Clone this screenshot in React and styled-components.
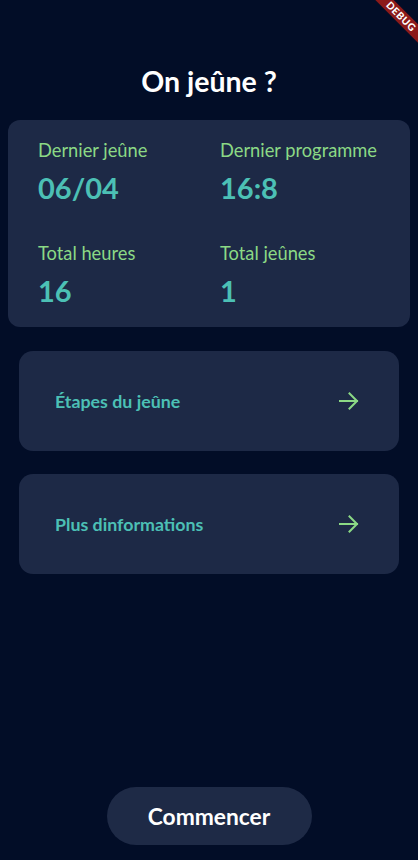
import React from "react";
import styled, { createGlobalStyle } from "styled-components";

const Global = createGlobalStyle`
    html, body {
        margin: 0;
        padding: 0;
        background-color: #020d27;
    }
    * {
        box-sizing: border-box;
    }
`

const Screen = styled.div`
    position: relative;
    width: 418px;
    height: 860px;
    overflow: hidden;
    background-color: #020d27;
    font-family: "Lato", "Noto Sans", sans-serif;
    display: flex;
    flex-direction: column;
    padding: 62px 8px 15px 8px;
`
const Title = styled.h1`
    margin: 0;
    height: 38px;
    line-height: 38px;
    text-align: center;
    color: white;
    font-size: 28.5px;
    font-weight: 700;
`
const StatsCard = styled.div`
    margin-top: 20px;
    background-color: #1d2946;
    border-radius: 12px;
    padding: 20px 14px 19px 30px;
    display: grid;
    grid-template-columns: 182px 1fr;
    row-gap: 38px;
`
const Stat = styled.div`
    display: flex;
    flex-direction: column;
    gap: 11px;
`
const Label = styled.span`
    color: #8bd985;
    font-size: 18.3px;
    line-height: 20px;
    white-space: nowrap;
`
const Value = styled.span`
    color: #4cc0b5;
    font-size: 29px;
    font-weight: 700;
    line-height: 34px;
`
const LinkList = styled.div`
    margin-top: 24px;
    padding: 0 11px;
    display: flex;
    flex-direction: column;
    gap: 23px;
`
const LinkCard = styled.div`
    height: 100px;
    background-color: #1d2946;
    border-radius: 14px;
    display: flex;
    align-items: center;
    justify-content: space-between;
    padding: 0 40px 0 36px;
    cursor: pointer;
`
const LinkText = styled.span`
    color: #4cc0b5;
    font-size: 17.8px;
    font-weight: 700;
`
const Footer = styled.div`
    margin-top: auto;
    display: flex;
    justify-content: center;
`
const StartButton = styled.button`
    width: 205px;
    height: 58px;
    border: none;
    border-radius: 29px;
    background-color: #1e2a46;
    color: white;
    font-family: "Lato", "Noto Sans", sans-serif;
    font-size: 22.8px;
    font-weight: 700;
    cursor: pointer;
`
const Banner = styled.div`
    position: absolute;
    top: 10px;
    right: -28px;
    width: 90px;
    height: 13px;
    background-color: #8b1a1a;
    transform: rotate(45deg);
    color: white;
    font-family: "Lato", sans-serif;
    font-size: 10px;
    font-weight: 900;
    line-height: 13px;
    text-align: center;
    letter-spacing: 0.5px;
`

function Arrow(){
    return(
        <svg width="20" height="20" viewBox="0 0 20 20" fill="none" stroke="#8bd985" strokeWidth="2" strokeLinecap="square">
            <path d="M1 10 H18" />
            <path d="M10.5 2.5 L18 10 L10.5 17.5" />
        </svg>
    )
}

const stats = [
    { label: "Dernier jeûne", value: "06/04" },
    { label: "Dernier programme", value: "16:8" },
    { label: "Total heures", value: "16" },
    { label: "Total jeûnes", value: "1" },
]

export default function App(){
    return(
        <Screen>
            <Global />
            <Banner>DEBUG</Banner>
            <Title>On jeûne ?</Title>
            <StatsCard>
                {stats.map((s) => (
                    <Stat key={s.label}>
                        <Label>{s.label}</Label>
                        <Value>{s.value}</Value>
                    </Stat>
                ))}
            </StatsCard>
            <LinkList>
                <LinkCard>
                    <LinkText>Étapes du jeûne</LinkText>
                    <Arrow />
                </LinkCard>
                <LinkCard>
                    <LinkText>Plus dinformations</LinkText>
                    <Arrow />
                </LinkCard>
            </LinkList>
            <Footer>
                <StartButton>Commencer</StartButton>
            </Footer>
        </Screen>
    )
}
